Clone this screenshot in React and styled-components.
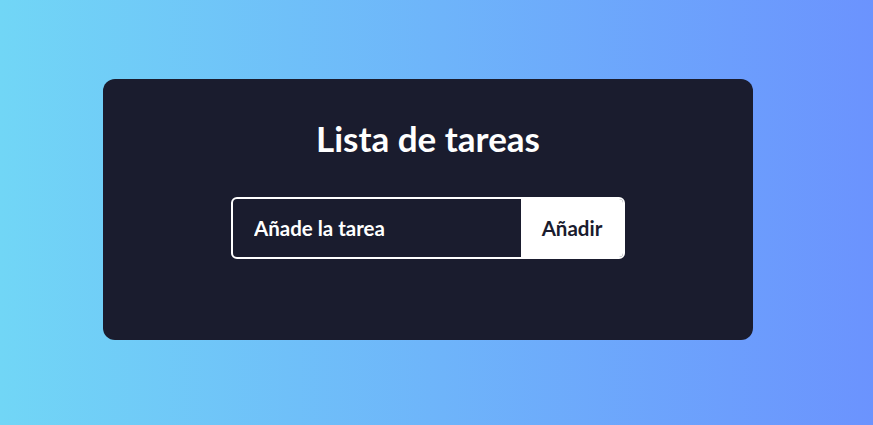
import styled, { createGlobalStyle } from 'styled-components';

const GlobalStyle = createGlobalStyle`
  html, body {
    margin: 0;
    padding: 0;
  }
  body {
    min-height: 425px;
    font-family: 'Lato', 'Open Sans', sans-serif;
    background: linear-gradient(to right, #71d6f6, #6b93fe);
  }
`;

const Page = styled.div`
  min-height: 425px;
  padding: 79px 0 0 103px;
  box-sizing: border-box;
`;

const Card = styled.div`
  width: 650px;
  height: 261px;
  box-sizing: border-box;
  background: #1a1c2e;
  border-radius: 12px;
  padding-top: 38px;
  display: flex;
  flex-direction: column;
  align-items: center;
`;

const Title = styled.h1`
  margin: 0;
  color: #ffffff;
  font-size: 35px;
  font-weight: 700;
  line-height: 42px;
`;

const Form = styled.form`
  margin-top: 38px;
  display: flex;
  width: 394px;
  height: 62px;
  box-sizing: border-box;
  border: 2px solid #ffffff;
  border-radius: 6px;
  overflow: hidden;
`;

const Input = styled.input`
  flex: 1;
  min-width: 0;
  border: none;
  outline: none;
  background: transparent;
  color: #ffffff;
  font-family: inherit;
  font-size: 20.5px;
  font-weight: 700;
  padding: 0 0 0 21px;

  &::placeholder {
    color: #ffffff;
    opacity: 1;
  }
`;

const Button = styled.button`
  width: 102px;
  border: none;
  background: #ffffff;
  color: #1a1c2e;
  font-family: inherit;
  font-size: 20.5px;
  font-weight: 700;
  padding: 0;
  cursor: pointer;
`;

const App = () => {
  return (
    <>
      <GlobalStyle />
      <Page>
        <Card>
          <Title>Lista de tareas</Title>
          <Form onSubmit={e => e.preventDefault()}>
            <Input placeholder="Añade la tarea" />
            <Button type="submit">Añadir</Button>
          </Form>
        </Card>
      </Page>
    </>
  );
};

export default App;
